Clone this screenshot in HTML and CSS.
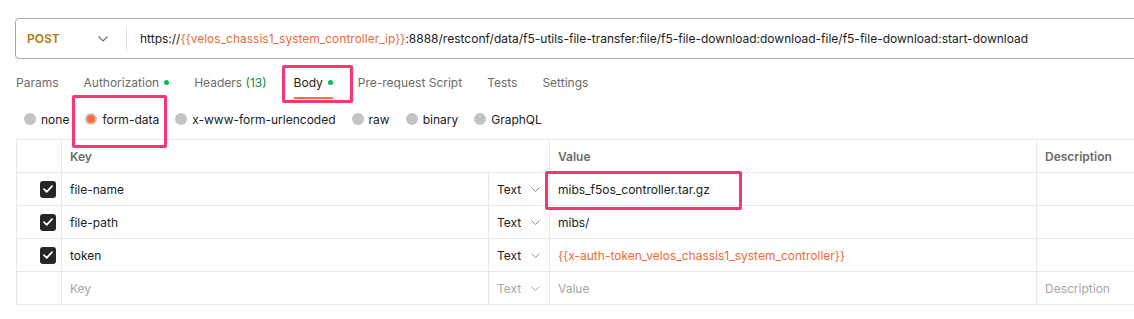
FILE: index.html
```html
<!DOCTYPE html>
<html lang="en">
<head>
<meta charset="utf-8">
<title>Request</title>
<link rel="stylesheet" href="styles.css">
</head>
<body>
<div class="page">
  <div class="urlbar">
    <div class="method">
      <span class="method-name">POST</span>
      <svg class="chev" width="10" height="6" viewBox="0 0 10 6"><path d="M0.5 0.5 L5 5 L9.5 0.5" fill="none" stroke="#6b6b6b" stroke-width="1.1"/></svg>
    </div>
    <div class="divider"></div>
    <div class="url">https://<span class="var">{{velos_chassis1_system_controller_ip}}</span>:8888/restconf/data/f5-utils-file-transfer:file/f5-file-download:download-file/f5-file-download:start-download</div>
  </div>

  <nav class="tabs">
    <span class="tab">Params</span>
    <span class="tab">Authorization<span class="dot"></span></span>
    <span class="tab">Headers <span class="count">(13)</span></span>
    <span class="tab active">Body<span class="dot"></span></span>
    <span class="tab">Pre-request Script</span>
    <span class="tab">Tests</span>
    <span class="tab">Settings</span>
  </nav>

  <div class="body-types">
    <span class="opt"><span class="radio"></span>none</span>
    <span class="opt selected"><span class="radio"></span>form-data</span>
    <span class="opt"><span class="radio"></span>x-www-form-urlencoded</span>
    <span class="opt"><span class="radio"></span>raw</span>
    <span class="opt"><span class="radio"></span>binary</span>
    <span class="opt"><span class="radio"></span>GraphQL</span>
  </div>

  <div class="kv">
    <div class="cell"></div>
    <div class="cell head span2">Key</div>
    <div class="cell head">Value</div>
    <div class="cell head">Description</div>

    <div class="cell check"><span class="box"><svg width="10" height="8" viewBox="0 0 10 8"><path d="M1 4.2 L3.7 6.8 L9 1.2" fill="none" stroke="#fff" stroke-width="1.8" stroke-linecap="round" stroke-linejoin="round"/></svg></span></div>
    <div class="cell">file-name</div>
    <div class="cell type">Text<svg class="chev" width="9" height="5" viewBox="0 0 9 5"><path d="M0.5 0.5 L4.5 4.5 L8.5 0.5" fill="none" stroke="#8f8f8f" stroke-width="1"/></svg></div>
    <div class="cell marked">mibs_f5os_controller.tar.gz</div>
    <div class="cell"></div>

    <div class="cell check"><span class="box"><svg width="10" height="8" viewBox="0 0 10 8"><path d="M1 4.2 L3.7 6.8 L9 1.2" fill="none" stroke="#fff" stroke-width="1.8" stroke-linecap="round" stroke-linejoin="round"/></svg></span></div>
    <div class="cell">file-path</div>
    <div class="cell type">Text<svg class="chev" width="9" height="5" viewBox="0 0 9 5"><path d="M0.5 0.5 L4.5 4.5 L8.5 0.5" fill="none" stroke="#8f8f8f" stroke-width="1"/></svg></div>
    <div class="cell">mibs/</div>
    <div class="cell"></div>

    <div class="cell check"><span class="box"><svg width="10" height="8" viewBox="0 0 10 8"><path d="M1 4.2 L3.7 6.8 L9 1.2" fill="none" stroke="#fff" stroke-width="1.8" stroke-linecap="round" stroke-linejoin="round"/></svg></span></div>
    <div class="cell">token</div>
    <div class="cell type">Text<svg class="chev" width="9" height="5" viewBox="0 0 9 5"><path d="M0.5 0.5 L4.5 4.5 L8.5 0.5" fill="none" stroke="#8f8f8f" stroke-width="1"/></svg></div>
    <div class="cell var">{{x-auth-token_velos_chassis1_system_controller}}</div>
    <div class="cell"></div>

    <div class="cell"></div>
    <div class="cell ph">Key</div>
    <div class="cell type ph">Text<svg class="chev" width="9" height="5" viewBox="0 0 9 5"><path d="M0.5 0.5 L4.5 4.5 L8.5 0.5" fill="none" stroke="#a6a6a6" stroke-width="1"/></svg></div>
    <div class="cell ph">Value</div>
    <div class="cell ph">Description</div>
  </div>
</div>
</body>
</html>
```

FILE: styles.css
```css
html, body {
  margin: 0;
  padding: 0;
  background: #ffffff;
  overflow: hidden;
}

body {
  font-family: Inter, "Noto Sans", sans-serif;
  font-size: 12px;
  color: #212121;
}

.page {
  padding-left: 15px;
}

.urlbar {
  margin-top: 18px;
  margin-right: -40px;
  height: 41px;
  box-sizing: border-box;
  border: 1px solid #a8a8a8;
  border-radius: 4px;
  display: flex;
  align-items: center;
}

.method {
  width: 110px;
  box-sizing: border-box;
  padding: 0 18px 0 11px;
  display: flex;
  align-items: center;
  justify-content: space-between;
}

.method-name {
  color: #ad7a03;
  font-weight: 600;
  font-size: 12px;
}

.divider {
  width: 1px;
  height: 24px;
  background: #e0e0e0;
}

.url {
  padding-left: 13px;
  white-space: nowrap;
}

.var {
  color: #ef6a36;
}

.tabs {
  display: flex;
  gap: 25px;
  margin-top: 6px;
  padding-left: 1px;
  height: 34px;
}

.tab {
  position: relative;
  display: flex;
  align-items: center;
  color: #6b6b6b;
  white-space: pre;
}

.tab .dot {
  width: 5px;
  height: 5px;
  border-radius: 50%;
  background: #0cbb52;
  margin-left: 5px;
}

.tab .count {
  color: #0b8a3c;
}

.tab.active {
  color: #212121;
  margin-left: 2px;
}

.tab.active::after {
  content: "";
  position: absolute;
  left: 0;
  right: 0;
  bottom: 0;
  height: 2px;
  background: #ff6c37;
}

.tab.active::before {
  content: "";
  position: absolute;
  left: -12px;
  right: -20px;
  top: 0;
  bottom: -4px;
  border: 3px solid #f7356f;
  border-radius: 2px;
}

.body-types {
  position: relative;
  z-index: 2;
  display: flex;
  align-items: center;
  gap: 16px;
  height: 40px;
  padding-left: 9px;
}

.opt {
  position: relative;
  display: flex;
  align-items: center;
  gap: 5px;
  color: #212121;
}

.radio {
  width: 12px;
  height: 12px;
  border-radius: 50%;
  background: #c4c4c4;
  box-sizing: border-box;
}

.opt.selected .radio {
  background: #ff6c37;
  border: 2px solid #c4c4c4;
}

.opt.selected::after {
  content: "";
  position: absolute;
  left: -13px;
  right: -8px;
  top: -17px;
  bottom: -21px;
  border: 3px solid #f7356f;
  border-radius: 2px;
}

.kv {
  position: relative;
  z-index: 1;
  margin-left: 1px;
  margin-right: -60px;
  display: grid;
  grid-template-columns: 44px 426px 60px 486px 1fr;
  grid-auto-rows: 32px;
  gap: 1px;
  padding: 1px 0 1px 1px;
  background: #e9e9e9;
}

.cell {
  background: #ffffff;
  display: flex;
  align-items: center;
  padding-left: 8px;
  white-space: nowrap;
  position: relative;
}

.cell.span2 {
  grid-column: span 2;
}

.cell.head {
  color: #6b6b6b;
  font-weight: 600;
  font-size: 12px;
}

.cell.check {
  justify-content: flex-end;
  padding-right: 5px;
}

.box {
  width: 16px;
  height: 17px;
  border-radius: 3px;
  background: #262626;
  display: flex;
  align-items: center;
  justify-content: center;
}

.cell.type {
  gap: 10px;
}

.cell.ph {
  color: #a6a6a6;
}

.cell.marked {
  z-index: 3;
}

.cell.marked::after {
  content: "";
  position: absolute;
  left: -5px;
  top: -2px;
  width: 197px;
  height: 39px;
  box-sizing: border-box;
  border: 3px solid #f7356f;
  border-radius: 2px;
}
```
